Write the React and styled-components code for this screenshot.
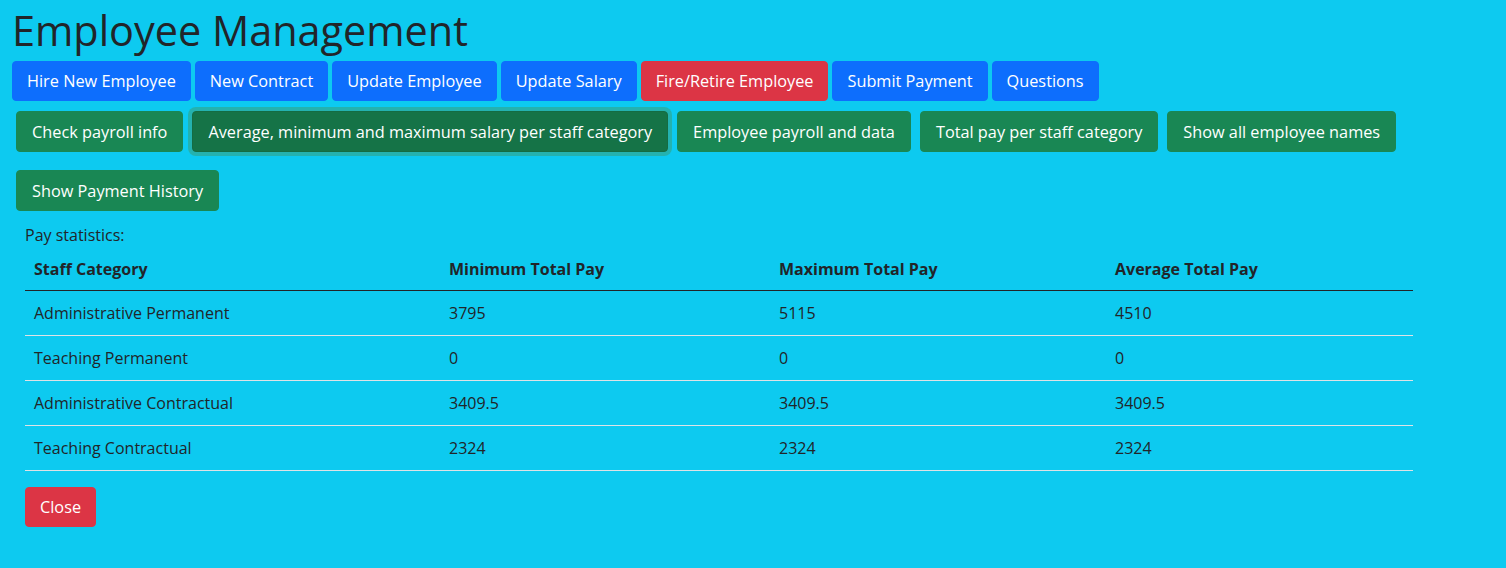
import React from "react";
import styled, { createGlobalStyle, css } from "styled-components";

const GlobalStyle = createGlobalStyle`
  html, body {
    margin: 0;
    background: #0dcaf0;
    color: #212529;
    font-family: "Open Sans", "Noto Sans", sans-serif;
    font-size: 16px;
  }
`;

const Page = styled.div`
  padding: 0 12px;
  min-height: 568px;
`;

const Title = styled.h1`
  margin: 0;
  padding-top: 2px;
  height: 59px;
  font-size: 41.4px;
  font-weight: 400;
  line-height: 56px;
  color: #212529;
`;

const Toolbar = styled.div`
  display: flex;
  flex-wrap: wrap;
  gap: ${({ $gap }) => $gap || "4px"};
  padding: ${({ $pad }) => $pad || "0"};
`;

const variants = {
  primary: css`
    background: #0d6efd;
    border-color: #0d6efd;
  `,
  danger: css`
    background: #dc3545;
    border-color: #dc3545;
  `,
  success: css`
    background: #198754;
    border-color: #198754;
  `,
};

const Button = styled.button`
  height: ${({ $h }) => $h || "40px"};
  padding: 0 ${({ $px }) => $px || "14px"};
  border: 1px solid transparent;
  border-radius: 4px;
  color: #fff;
  font-family: inherit;
  font-size: 16.3px;
  line-height: 24px;
  cursor: pointer;
  ${({ $variant }) => variants[$variant || "primary"]}
  ${({ $active }) =>
    $active &&
    css`
      background: #157347;
      border-color: #146c43;
      box-shadow: 0 0 0 4px rgba(60, 153, 110, 0.5);
    `}
`;

const Section = styled.div`
  padding: 12px 13px 0;
`;

const Caption = styled.div`
  font-size: 16px;
  line-height: 24px;
  height: 24px;
`;

const Table = styled.table`
  width: 1388px;
  table-layout: fixed;
  border-collapse: collapse;
  margin-top: 2px;
  font-size: 16px;
`;

const Th = styled.th`
  text-align: left;
  font-weight: 700;
  padding: 8px 9px 9px;
  height: 24px;
  border-bottom: 1px solid #212529;
  width: ${({ $w }) => $w};
`;

const Td = styled.td`
  padding: 10px 9px;
  height: 24px;
  border-bottom: 1px solid #dee2e6;
`;

const CloseRow = styled.div`
  padding-top: 16px;
`;

const topButtons = [
  ["Hire New Employee", "primary"],
  ["New Contract", "primary"],
  ["Update Employee", "primary"],
  ["Update Salary", "primary"],
  ["Fire/Retire Employee", "danger"],
  ["Submit Payment", "primary"],
  ["Questions", "primary"],
];

const queryButtons = [
  "Check payroll info",
  "Average, minimum and maximum salary per staff category",
  "Employee payroll and data",
  "Total pay per staff category",
  "Show all employee names",
  "Show Payment History",
];

const rows = [
  ["Administrative Permanent", "3795", "5115", "4510"],
  ["Teaching Permanent", "0", "0", "0"],
  ["Administrative Contractual", "3409.5", "3409.5", "3409.5"],
  ["Teaching Contractual", "2324", "2324", "2324"],
];

export default function App() {
  return (
    <Page>
      <GlobalStyle />
      <Title>Employee Management</Title>
      <Toolbar>
        {topButtons.map(([label, v]) => (
          <Button key={label} $variant={v}>
            {label}
          </Button>
        ))}
      </Toolbar>
      <Toolbar $gap="18px 9px" $pad="10px 4px 0">
        {queryButtons.map((label, i) => (
          <Button
            key={label}
            $variant="success"
            $h="41px"
            $px="15px"
            $active={i === 1}
          >
            {label}
          </Button>
        ))}
      </Toolbar>
      <Section>
        <Caption>Pay statistics:</Caption>
        <Table>
          <thead>
            <tr>
              <Th $w="397px">Staff Category</Th>
              <Th $w="312px">Minimum Total Pay</Th>
              <Th $w="318px">Maximum Total Pay</Th>
              <Th>Average Total Pay</Th>
            </tr>
          </thead>
          <tbody>
            {rows.map((r) => (
              <tr key={r[0]}>
                {r.map((c, j) => (
                  <Td key={j}>{c}</Td>
                ))}
              </tr>
            ))}
          </tbody>
        </Table>
        <CloseRow>
          <Button $variant="danger">Close</Button>
        </CloseRow>
      </Section>
    </Page>
  );
}
